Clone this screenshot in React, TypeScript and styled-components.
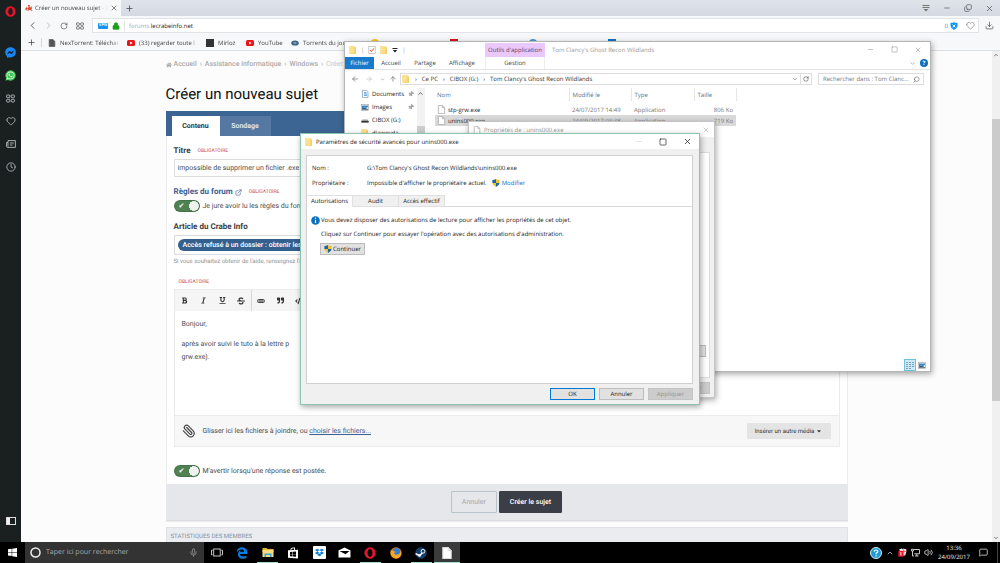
import React from "react";
import styled, { createGlobalStyle, css } from "styled-components";
import {
  Heart, Clock, Download, X, Minus, Square, Search, Lock, RotateCw, ArrowLeft, ArrowRight, ArrowUp,
  ChevronDown, ChevronUp, ChevronLeft, ChevronRight, ExternalLink, Paperclip, Mic, Pin,
  Volume2, MessageSquare, Copy, Plus,
} from "lucide-react";
import {
  FaFacebookMessenger, FaWhatsapp, FaHome, FaBold, FaItalic, FaUnderline, FaStrikethrough,
  FaQuoteRight, FaCode, FaDropbox, FaEdgeLegacy, FaCaretDown,
} from "react-icons/fa";

const UI = `"Open Sans", "Noto Sans", sans-serif`;
const WEB = `Roboto, "Liberation Sans", sans-serif`;

const GlobalStyle = createGlobalStyle`
  *, *::before, *::after { box-sizing: border-box; }
  body { margin: 0; font-family: ${UI}; font-size: 6px; color: #222; overflow: hidden; text-rendering: geometricPrecision; }
  button, input, select { font: inherit; color: inherit; margin: 0; padding: 0; border: 0; background: none; border-radius: 0; text-rendering: inherit; }
  a { color: inherit; text-decoration: none; }
  svg { display: block; flex: none; }
  h1, h2, p, dl, dd { margin: 0; font-weight: 400; }
`;

const Desktop = styled.div`
  position: relative;
  display: flex;
  flex-direction: column;
  height: 100vh;
  overflow: hidden;
  background: #fff;
`;

/* ---------- Browser ---------- */

const Browser = styled.div`
  flex: 1;
  min-height: 0;
  display: flex;
`;

const SideRail = styled.nav`
  flex: 0 0 21px;
  display: flex;
  flex-direction: column;
  align-items: center;
  padding: 5px 0 16px;
  background: #1a1f20;
  color: #b9bdbf;
`;

const RailButton = styled.button<{ $first?: boolean; $last?: boolean }>`
  display: grid;
  place-items: center;
  width: 21px;
  height: 12px;
  margin-bottom: ${(p) => (p.$first ? 29 : 11)}px;
  ${(p) => p.$last && "margin-top: auto; margin-bottom: 0; height: 10px;"}
`;

const BrowserMain = styled.div`
  flex: 1;
  min-width: 0;
  display: flex;
  flex-direction: column;
`;

const TabStrip = styled.div`
  display: flex;
  align-items: center;
  height: 16px;
  flex: none;
  padding-right: 5px;
  background: linear-gradient(#dfe4eb, #d5dae2);
  color: #444;
`;

const BrowserTab = styled.div`
  display: flex;
  align-items: center;
  gap: 2px;
  width: 100px;
  height: 16px;
  padding: 0 3px 0 4px;
  background: #f7f8fa;
  margin-right: 4px;
`;

const FadeText = styled.span<{ $width: number }>`
  width: ${(p) => p.$width}px;
  line-height: 12px;
  white-space: nowrap;
  mask-image: linear-gradient(to right, #000 85%, transparent);
`;

const IconButton = styled.button<{ $w?: number }>`
  display: grid;
  place-items: center;
  width: ${(p) => p.$w ?? 12}px;
  height: 12px;
  flex: none;
`;

const WindowButtons = styled.div<{ $gap?: number; $color?: string }>`
  display: flex;
  gap: ${(p) => p.$gap ?? 12}px;
  margin-left: auto;
  color: ${(p) => p.$color ?? "#555"};
`;

const Toolbar = styled.div`
  display: flex;
  align-items: center;
  height: 19px;
  flex: none;
  padding: 0 5px;
  background: #f7f8fa;
  color: #555;
`;

const NavButtons = styled.div`
  display: flex;
  gap: 4px;
  margin-right: 6px;
`;

const AddressBox = styled.div`
  flex: 1;
  display: flex;
  align-items: center;
  gap: 4px;
  height: 15px;
  padding: 0 2px 0 5px;
  margin-right: 4px;
  border: 1px solid #e1e3e7;
  background: #fff;
`;

const VpnBadge = styled.span`
  width: 10px;
  height: 6px;
  border-radius: 1px;
  background: #1593f5;
  color: #fff;
  font-size: 4px;
  font-weight: 700;
  line-height: 6px;
  text-align: center;
`;

const Url = styled.div`
  flex: 1;
  padding-left: 4px;
  border-left: 1px solid #e4e4e4;
  line-height: 10px;
  color: #222;
  span { color: #aaa; }
`;

const Blocked = styled.span`
  display: flex;
  align-items: center;
  gap: 2px;
  color: #1593f5;
  margin-right: 2px;
`;

const Bookmarks = styled.nav`
  display: flex;
  align-items: center;
  height: 16px;
  flex: none;
  padding: 0 5px;
  background: #f7f8fa;
  border-bottom: 1px solid #dcdee1;
  overflow: hidden;
  color: #444;
`;

const Bookmark = styled.a<{ $width: number }>`
  display: flex;
  align-items: center;
  gap: 4px;
  flex: 0 0 ${(p) => p.$width}px;
`;

const BarSeparator = styled.span`
  width: 1px;
  height: 9px;
  margin: 0 6px 0 5px;
  background: #d5d7da;
`;

const Dot = styled.span<{ $bg: string; $round?: boolean }>`
  width: 8px;
  height: 8px;
  flex: none;
  background: ${(p) => p.$bg};
  border-radius: ${(p) => (p.$round ? 4 : 0)}px;
`;

const Viewport = styled.div`
  flex: 1;
  min-height: 0;
  display: flex;
  background: #fcfcfc;
`;

const Page = styled.main`
  flex: 1;
  min-width: 0;
  overflow: hidden;
  font-family: ${WEB};
  font-size: 7px;
  color: #4b4f54;
`;

const PageColumn = styled.div`
  width: 100%;
  max-width: 682px;
  margin: 0 auto;
`;

const ScrollTrack = styled.div`
  flex: 0 0 8px;
  display: grid;
  grid-template-rows: 8px 60fr 282fr 133fr 8px;
  place-items: center;
  background: #f0f0f0;
  color: #555;
`;

const ScrollThumb = styled.span`
  grid-row: 3;
  width: 8px;
  height: 100%;
  background: #cbcbcb;
`;

const ScrollEnd = styled.span`
  grid-row: 5;
`;

const Breadcrumb = styled.nav`
  display: flex;
  align-items: center;
  gap: 2px;
  padding-top: 8px;
  line-height: 11px;
  font-weight: 500;
  color: #aaa;
  white-space: nowrap;
  i { font-style: normal; padding: 0 1px; }
  span { font-weight: 400; color: #c8c8c8; }
`;

const PageTitle = styled.h1`
  padding: 14px 0 7px;
  font-size: 15px;
  line-height: 20px;
  color: #111;
`;

const Card = styled.section`
  background: #fff;
  border: 1px solid #ececec;
  border-top: 0;
  margin-bottom: 5px;
`;

const CardTabs = styled.div`
  display: flex;
  align-items: flex-end;
  height: 25px;
  padding-left: 6px;
  margin: 0 -1px;
  background: #3d6594;
`;

const CardTab = styled.button<{ $active?: boolean }>`
  height: 20px;
  width: ${(p) => (p.$active ? 48 : 51)}px;
  font-weight: 700;
  color: ${(p) => (p.$active ? "#333" : "#dfe6ee")};
  background: ${(p) => (p.$active ? "#fff" : "#5578a3")};
`;

const CardBody = styled.form`
  padding: 9px 7px 7px;
`;

const Field = styled.div`
  display: grid;
  gap: 2px;
  margin-bottom: 9px;
`;

const LabelRow = styled.div`
  display: flex;
  align-items: center;
  gap: 7px;
  height: 12px;
  font-size: 8px;
  line-height: 12px;
  font-weight: 700;
  color: #3a3d42;
  a { display: flex; align-items: center; gap: 2px; color: #3d5f94; }
`;

const Required = styled.span<{ $indent?: boolean }>`
  font-size: 5px;
  line-height: 12px;
  font-weight: 400;
  color: #c8494c;
  padding-left: ${(p) => (p.$indent ? 5 : 0)}px;
`;

const TextInput = styled.input`
  width: 100%;
  height: 18px;
  padding: 0 3px;
  border: 1px solid #dcdcdc;
  border-radius: 1px;
  background: #fff;
`;

const ToggleRow = styled.label`
  display: flex;
  align-items: center;
  gap: 3px;
  height: 12px;
  line-height: 12px;
`;

const Toggle = styled.input`
  appearance: none;
  width: 26px;
  height: 12px;
  border-radius: 6px;
  background:
    radial-gradient(circle at 20px 6px, #f0f2f0 0 4px, #dfe5df 5px, transparent 5px),
    #4f8152;
  box-shadow: inset 0 0 0 1px #44724a;
  &::before {
    content: "✔";
    display: block;
    padding-left: 5px;
    font: 7px/12px "DejaVu Sans", sans-serif;
    color: #fff;
  }
`;

const TagBox = styled.div`
  height: 20px;
  padding: 3px;
  border: 1px solid #dcdcdc;
  overflow: hidden;
`;

const Tag = styled.span`
  display: inline-block;
  height: 12px;
  padding: 0 5px;
  border-radius: 6px;
  background: #34608f;
  color: #fff;
  font-weight: 500;
  line-height: 12px;
  white-space: nowrap;
`;

const Help = styled.p`
  font-size: 6px;
  line-height: 10px;
  color: #929292;
`;

const Editor = styled.div`
  border: 1px solid #ebebeb;
  margin: 1px 0 18px;
`;

const EditorTools = styled.div`
  display: flex;
  align-items: center;
  height: 21px;
  background: #f5f5f5;
  color: #333;
`;

const ToolGroup = styled.div`
  display: flex;
  align-items: center;
  height: 100%;
  border-right: 1px solid #d8d8d8;
`;

const ToolButton = styled.button`
  display: grid;
  place-items: center;
  width: 19px;
  height: 20px;
`;

const EditorText = styled.div`
  height: 104px;
  padding: 7px;
  line-height: 13px;
  p + p { margin-top: 7px; }
`;

const Attach = styled.div`
  display: flex;
  align-items: center;
  height: 31px;
  padding: 0 8px 0 7px;
  gap: 7px;
  border-top: 1px solid #ebebeb;
  background: #f7f7f7;
  a { color: #3d5f94; text-decoration: underline; }
`;

const MediaButton = styled.button`
  display: flex;
  align-items: center;
  justify-content: center;
  gap: 2px;
  width: 84px;
  height: 16px;
  margin-left: auto;
  border-radius: 1px;
  background: #e4e4e4;
  font-size: 6px;
  color: #333;
`;

const CardFooter = styled.div`
  display: flex;
  align-items: center;
  justify-content: center;
  gap: 2px;
  height: 37px;
  margin: 0 -1px;
  background: #e5e7eb;
  border-bottom: 1px solid #dcdee1;
`;

const FormButton = styled.button<{ $primary?: boolean }>`
  height: 22px;
  padding: 0 10px;
  border-radius: 1px;
  font-weight: ${(p) => (p.$primary ? 500 : 400)};
  color: ${(p) => (p.$primary ? "#fff" : "#a3aab1")};
  background: ${(p) => (p.$primary ? "#3b3e47" : "transparent")};
  border: 1px solid ${(p) => (p.$primary ? "#3b3e47" : "#b9c3cc")};
`;

const StatsHeader = styled.h2`
  height: 30px;
  padding: 0 4px;
  border: 1px solid #e0e1e4;
  background: #ebecf0;
  color: #8492a2;
  font-size: 6px;
  line-height: 18px;
`;

/* ---------- Windows floating over the desktop ---------- */

const FloatWindow = styled.section<{ $x: number; $y: number; $w: number; $h: number; $edge: string; $bg: string }>`
  position: absolute;
  left: ${(p) => p.$x}px;
  top: ${(p) => p.$y}px;
  width: ${(p) => p.$w}px;
  height: ${(p) => p.$h}px;
  display: flex;
  flex-direction: column;
  border: 1px solid ${(p) => p.$edge};
  background: ${(p) => p.$bg};
  box-shadow: 1px 2px 6px rgba(0, 0, 0, 0.35);
`;

const WindowTitle = styled.header<{ $muted?: boolean }>`
  display: flex;
  align-items: center;
  gap: 3px;
  height: 15px;
  flex: none;
  padding: 0 6px 0 4px;
  background: #fff;
  color: ${(p) => (p.$muted ? "#999" : "#222")};
  white-space: nowrap;
`;

const QuickAccess = styled.div`
  display: flex;
  align-items: center;
  gap: 4px;
  width: 133px;
`;

const ContextTitle = styled.span`
  width: 60px;
  height: 14px;
  align-self: flex-end;
  background: #ebc8fc;
  color: #5b4066;
  text-align: center;
  line-height: 14px;
  margin-right: 4px;
`;

const Ribbon = styled.div`
  display: flex;
  align-items: center;
  height: 13px;
  flex: none;
  border-bottom: 1px solid #e3e3e3;
  color: #444;
`;

const RibbonTab = styled.button<{ $w: number; $file?: boolean; $context?: boolean }>`
  width: ${(p) => p.$w}px;
  height: 12px;
  ${(p) => p.$file && "background: #1979ca; color: #fff;"}
  ${(p) => p.$context && "margin-left: 3px; border: solid #eee; border-width: 0 1px;"}
`;

const RibbonEnd = styled.div`
  display: flex;
  align-items: center;
  gap: 4px;
  margin-left: auto;
  padding-right: 2px;
  color: #888;
`;

const HelpDot = styled.button`
  width: 8px;
  height: 8px;
  border-radius: 4px;
  background: #0f6cbd;
  color: #fff;
  font-weight: 700;
  line-height: 8px;
`;

const PathRow = styled.div`
  display: flex;
  align-items: center;
  height: 18px;
  flex: none;
  padding: 0 6px 0 4px;
  color: #666;
`;

const PathBox = styled.div`
  flex: 1;
  display: flex;
  align-items: center;
  gap: 5px;
  height: 12px;
  padding-left: 1px;
  margin: 0 6px 0 1px;
  border: 1px solid #ddd;
  color: #333;
  white-space: nowrap;
`;

const PathEnd = styled.div`
  display: flex;
  align-items: center;
  height: 100%;
  margin-left: auto;
  button + button { border-left: 1px solid #ddd; }
`;

const SearchBox = styled.div`
  display: flex;
  align-items: center;
  width: 106px;
  height: 12px;
  padding: 0 3px 0 4px;
  border: 1px solid #ddd;
  input { flex: 1; min-width: 0; }
  input::placeholder { color: #777; opacity: 1; }
`;

const ExplorerBody = styled.div`
  flex: 1;
  min-height: 0;
  display: flex;
`;

const Tree = styled.nav`
  width: 72px;
  padding: 0 3px 0 16px;
  overflow: hidden;
`;

const TreeItem = styled.a`
  display: flex;
  align-items: center;
  gap: 3px;
  height: 12px;
  margin-bottom: 1px;
  line-height: 12px;
  white-space: nowrap;
  & > :nth-child(3) { margin-left: auto; rotate: 45deg; }
`;

const TreeScroll = styled.div`
  width: 8px;
  padding-top: 2px;
  background: #f2f2f2;
  color: #555;
  &::after {
    content: "";
    display: block;
    height: 60px;
    margin-top: 29px;
    background: #cdcdcd;
  }
`;

const FileList = styled.div`
  flex: 1;
  padding-left: 10px;
`;

const FileTable = styled.table`
  width: 301px;
  table-layout: fixed;
  border-collapse: collapse;
  line-height: 10px;
  color: #777;
  th { height: 13px; padding: 0 3px; font-weight: 400; text-align: left; color: #5b6f8c; border-right: 1px solid #e6e6e6; font-size: 6px; }
  th:first-child, td:first-child { padding-left: 2px; }
  td { height: 11px; padding: 0 3px; white-space: nowrap; }
  td:last-child { text-align: right; }
  tbody::before { content: ""; display: block; height: 3px; }
`;

const FileRow = styled.tr<{ $selected?: boolean }>`
  background: ${(p) => (p.$selected ? "#d9d9d9" : "transparent")};
`;

const FileName = styled.span`
  display: flex;
  align-items: center;
  gap: 2px;
  color: #222;
`;

const ViewSwitch = styled.div`
  display: flex;
  align-items: center;
  justify-content: flex-end;
  gap: 2px;
  height: 12px;
  flex: none;
  padding-right: 4px;
`;

const ViewButton = styled.button<{ $on?: boolean }>`
  display: grid;
  place-items: center;
  width: ${(p) => (p.$on ? 12 : 8)}px;
  height: 12px;
  ${(p) => p.$on && "background: #cfeaf7; border: 1px solid #6fbfe0;"}
`;

const PropsPanel = styled.div`
  flex: 1;
  display: flex;
  align-items: flex-end;
  justify-content: flex-end;
  margin: 15px 4px 0 7px;
  padding: 0 3px 20px;
  border: 1px solid #dcdcdc;
  background: #fff;
`;

const ButtonRow = styled.div<{ $tight?: boolean }>`
  display: flex;
  justify-content: flex-end;
  gap: 4px;
  padding: ${(p) => (p.$tight ? "4px 4px 3px" : "4px 6px 4px")};
`;

const WinButton = styled.button<{ $kind?: "default" | "disabled" }>`
  display: flex;
  align-items: center;
  justify-content: center;
  gap: 1px;
  width: 45px;
  height: 12px;
  line-height: 10px;
  background: #e1e1e1;
  border: 1px solid #bdbdbd;
  ${(p) => p.$kind === "default" && css`border-color: #0078d7;`}
  ${(p) => p.$kind === "disabled" && css`background: #cccccc; border-color: #c4c4c4; color: #949494;`}
`;

const SecurityPanel = styled.div`
  flex: 1;
  display: flex;
  flex-direction: column;
  margin: 6px 6px 0 5px;
  border: 1px solid #cfcfcf;
  background: #fff;
`;

const Facts = styled.dl`
  display: grid;
  grid-template-columns: 55px 1fr;
  row-gap: 5px;
  padding: 7px 5px 7px;
  line-height: 10px;
  dd { display: flex; align-items: center; gap: 5px; }
  a { display: flex; align-items: center; gap: 2px; color: #0a6fd6; }
`;

const SheetTabs = styled.div`
  display: flex;
  height: 12px;
  &::after { content: ""; flex: 1; border-bottom: 1px solid #d9d9d9; }
`;

const SheetTab = styled.button<{ $active?: boolean }>`
  width: 46px;
  border: 1px solid #e0e0e0;
  border-left: 0;
  ${(p) => (p.$active ? "background: #fff; border-bottom-color: #fff;" : "background: #f0f0f0;")}
`;

const Message = styled.div`
  display: grid;
  justify-items: start;
  gap: 4px;
  padding: 8px 4px;
  line-height: 10px;
  & > p { padding-left: 10px; }
  & > button { margin-left: 9px; }
`;

const MessageLead = styled.div`
  display: flex;
  align-items: center;
  gap: 1px;
`;

/* ---------- Taskbar ---------- */

const Taskbar = styled.footer`
  display: flex;
  align-items: stretch;
  height: 21px;
  flex: none;
  background: #000;
  color: #eee;
`;

const TaskButton = styled.button<{ $open?: boolean; $active?: boolean }>`
  flex: 1;
  display: grid;
  place-items: center;
  &::after {
    content: "";
    grid-area: 1 / 1;
    align-self: end;
    width: ${(p) => (p.$active ? 26 : 21)}px;
    height: 1px;
    background: ${(p) => (p.$open ? "#9fe3cf" : "transparent")};
  }
  & > svg { grid-area: 1 / 1; }
  background: ${(p) => (p.$active ? "#3a3a3a" : "none")};
`;

const StartButton = styled.button`
  display: grid;
  place-items: center;
  width: 25px;
`;

const TaskSearch = styled.label`
  display: flex;
  align-items: center;
  gap: 5px;
  width: 179px;
  padding: 0 6px 0 5px;
  background: #333;
  input { flex: 1; min-width: 0; font-size: 7px; }
  input::placeholder { color: #a9a9a9; opacity: 1; }
`;

const TaskIcons = styled.div`
  display: flex;
  width: 256px;
`;

const Tray = styled.div`
  display: flex;
  align-items: center;
  gap: 4px;
  margin-left: auto;
`;

const TrayClock = styled.time`
  width: 34px;
  text-align: center;
  line-height: 9px;
`;

const ShowDesktop = styled.span`
  width: 1px;
  height: 100%;
  margin: 0 2px 0 1px;
  background: #444;
`;

/* ---------- Drawings ---------- */

const OperaO = ({ size = 12 }: { size?: number }) => (
  <svg width={size} height={size} viewBox="0 0 12 12">
    <path fillRule="evenodd" fill="#e3142c" d="M6 0.3a5.6 5.7 0 1 0 0 11.4a5.6 5.7 0 1 0 0-11.4zM6 2.1c1.5 0 2.4 1.7 2.4 3.9S7.500 9.900 6 9.900S3.600 8.200 3.600 6S4.500 2.100 6 2.100z" />
  </svg>
);

const Grid4 = ({ size = 9 }: { size?: number }) => (
  <svg width={size} height={size} viewBox="0 0 9 9" fill="none" stroke="currentColor" strokeWidth="0.9">
    <rect x="0.6" y="1" width="3.2" height="2.700" rx="0.7" />
    <rect x="5.200" y="1" width="3.2" height="2.700" rx="0.7" />
    <rect x="0.6" y="5.300" width="3.2" height="2.700" rx="0.7" />
    <rect x="5.200" y="5.300" width="3.2" height="2.700" rx="0.7" />
  </svg>
);

const NewsIcon = () => (
  <svg width="10" height="8" viewBox="0 0 10 8" fill="none" stroke="currentColor" strokeWidth="0.9">
    <path d="M2 .6h7.400v6.800H1.500Q.6 7.400 .6 6.400V2.500H2zM2 2.500v4M4 3h3.800M4 5h2.500" />
  </svg>
);

const PanelIcon = () => (
  <svg width="10" height="8" viewBox="0 0 10 8">
    <rect x="0.500" y="0.500" width="9" height="7" fill="none" stroke="#ddd" />
    <rect x="1" y="1" width="3" height="6" fill="#eee" />
  </svg>
);

const CrabIcon = () => (
  <svg width="8" height="8" viewBox="0 0 8 8" fill="#d94a2b">
    <ellipse cx="4.600" cy="4.600" rx="2.300" ry="1.500" />
    <path d="M.4 4.200L2 3l.5 1.200L1.800 6 .6 6.400zM3 .8l2 .4-.2 1.400-1.500.3zM5.500 2.300l1.800.6-.5 1.300zM6 5.500l1.500.7-.4.8-1.600-.7zM3 5.800l.8.8-.8.7-.6-.7z" />
  </svg>
);

const YouTubeIcon = () => (
  <svg width="8" height="8" viewBox="0 0 8 8">
    <rect x="0" y="1" width="8" height="6" rx="1.500" fill="#e8141c" />
    <path d="M3.100 2.600v2.800L5.600 4z" fill="#fff" />
  </svg>
);

const TorrentIcon = () => (
  <svg width="8" height="8" viewBox="0 0 8 8">
    <ellipse cx="4" cy="4" rx="3.800" ry="2.600" fill="#3d6486" />
    <path d="M2.500 4h3" stroke="#dfe9f0" strokeWidth="0.800" />
  </svg>
);

const LinkPill = () => (
  <svg width="8" height="8" viewBox="0 0 8 8" fill="none" stroke="#444">
    <rect x="0.700" y="2.500" width="6.600" height="3" rx="1.500" strokeWidth="1.100" />
    <path d="M2 4h4" strokeWidth="1.200" />
  </svg>
);

const FolderIcon = ({ size = 8 }: { size?: number }) => (
  <svg width={size} height={size} viewBox="0 0 8 8">
    <path fill="#f5cf68" d="M0.500 0h5v1l1.500.3V8H.5z" />
    <path fill="#fbe08e" d="M.5 0h4.800v7.500H.5z" />
  </svg>
);

const FileIcon = ({ size = 8, fill = "#fff", stroke = "#aaa" }: { size?: number; fill?: string; stroke?: string }) => (
  <svg width={size} height={size} viewBox="0 0 8 8">
    <path d="M1.200.4h3.600l2 2v5.200H1.200z" fill={fill} stroke={stroke} strokeWidth="0.7" />
    <path d="M4.800.4v2h2" fill="none" stroke={stroke} strokeWidth="0.7" />
  </svg>
);

const CheckedPage = () => (
  <svg width="8" height="8" viewBox="0 0 8 8">
    <rect x="0.800" y="0.400" width="6.400" height="7.200" fill="#fff" stroke="#b5b5b5" strokeWidth="0.700" />
    <path d="M2 4l1.500 1.600L6 2.300" fill="none" stroke="#e0532f" />
  </svg>
);

const QuickMenu = () => (
  <svg width="6" height="6" viewBox="0 0 6 6" fill="#222">
    <path d="M.5 1h5v.9h-5zM.8 3h4.400L3 5.500z" />
  </svg>
);

const PictureIcon = () => (
  <svg width="8" height="7" viewBox="0 0 8 7">
    <rect x="0.400" y="0.500" width="7.200" height="6" fill="#fff" stroke="#999" strokeWidth="0.600" />
    <path fill="#3a87c8" d="M1 1.500h6v1.600L5 4 3 3.500l-2 1z" />
    <path fill="#3c5a78" d="M1 4.500l2-1 4 1.500v.8H1z" />
  </svg>
);

const DocLibIcon = () => (
  <svg width="8" height="8" viewBox="0 0 8 8">
    <path d="M1.500.4h4l1.500 1.500v5.700H1.500z" fill="#fff" stroke="#6d93b8" strokeWidth="0.700" />
    <path d="M3 2.600h2.500M3 4h3M3 5.400h3" stroke="#3a87c8" strokeWidth="0.800" />
  </svg>
);

const DriveIcon = () => (
  <svg width="8" height="8" viewBox="0 0 8 8">
    <path fill="#999" d="M1.500 3.500h5l1.200 1.500H.3z" />
    <rect x="0.300" y="5" width="7.400" height="1.600" fill="#333" />
  </svg>
);

const Shield = ({ size = 8 }: { size?: number }) => (
  <svg width={size} height={size} viewBox="0 0 8 8">
    <path fill="#1d64ab" d="M4 0Q2.500 1 .4 1.100V4H4z" />
    <path fill="#f4c22b" d="M4 0Q5.500 1 7.600 1.100V4H4z" />
    <path fill="#f4c22b" d="M.4 4Q.8 6.500 4 8V4z" />
    <path fill="#1d64ab" d="M7.600 4Q7.200 6.500 4 8V4z" />
  </svg>
);

const InfoIcon = () => (
  <svg width="9" height="9" viewBox="0 0 9 9">
    <circle cx="4.500" cy="4.500" r="4.300" fill="#0b6fc2" />
    <path d="M4.500 3.800v3.200" stroke="#fff" strokeWidth="1.200" />
    <circle cx="4.500" cy="2.300" r="0.700" fill="#fff" />
  </svg>
);

const OperaMenu = () => (
  <svg width="8" height="8" viewBox="0 0 8 8" stroke="#777" fill="#777">
    <path d="M.5 1.500h7M.5 3.500h7" />
    <path stroke="none" d="M1.500 5h5L4 7.500z" />
  </svg>
);

const BlockShield = () => (
  <svg width="8" height="8" viewBox="0 0 8 8">
    <path fill="#1593f5" d="M.5.8Q2.500 1 4 .2 5.500 1 7.500.8V4Q7.200 6.600 4 7.900.8 6.600.5 4z" />
    <path d="M2.600 2.600l2.800 2.800M5.400 2.600L2.600 5.400" stroke="#fff" strokeWidth="0.900" />
  </svg>
);

const WindowsLogo = () => (
  <svg width="9" height="9" viewBox="0 0 9 9" fill="#fff">
    <path d="M0 1.300l3.700-.5v3.400H0zM4.200.7L9 0v4.200H4.200zM0 4.700h3.700v3.400L0 7.600zM4.200 4.700H9V9l-4.800-.7z" />
  </svg>
);

const TaskViewIcon = () => (
  <svg width="12" height="9" viewBox="0 0 12 9" fill="none" stroke="#ddd" strokeWidth="0.900">
    <rect x="2.700" y="1" width="6.500" height="7" />
    <path d="M1.700 2.200H.5v4.600h1.200M10.300 2.200h1.200v4.600h-1.200" />
  </svg>
);

const ExplorerIcon = () => (
  <svg width="12" height="11" viewBox="0 0 12 11">
    <path fill="#e9b93f" d="M.5 1h4l1 1h6v3H.5z" />
    <path fill="#fbdc7d" d="M.5 3h11v7H.5z" />
    <path fill="#35a3dc" d="M2.500 10V6.500h7V10H8V8H4v2z" />
  </svg>
);

const StoreIcon = () => (
  <svg width="12" height="12" viewBox="0 0 12 12">
    <path d="M4 3.500V1.500l3.500-.8v2.500" fill="none" stroke="#fff" strokeWidth="0.900" />
    <path fill="#fff" d="M1 3.200l10-.4v8.700L1 10.800z" />
    <path fill="#000" d="M3 5l2.500-.2v2.100H3zM6 4.800l3-.2v2.300H6zM3 7.300h2.500v2.200L3 9.300zM6 7.300h3v2.500l-3-.3z" />
  </svg>
);

const MailIcon = () => (
  <svg width="13" height="11" viewBox="0 0 13 11">
    <path fill="#fff" d="M.5 3.500L6.500.5l6 3V10.500H.5z" />
    <path d="M1.500 4h10L7.500 7.300z" fill="#000" />
  </svg>
);

const DropboxTile = () => (
  <svg width="13" height="13" viewBox="0 0 13 13">
    <rect width="13" height="13" rx="1" fill="#fff" />
    <FaDropbox x={2} y={2} size={9} color="#0a7be0" />
  </svg>
);

const SteamTile = () => (
  <svg width="12" height="12" viewBox="0 0 12 12">
    <circle cx="6" cy="6" r="5.700" fill="#12406e" />
    <path d="M.6 6.800L4.800 8.600 8 5" stroke="#fff" strokeWidth="1.500" fill="none" />
    <circle cx="8" cy="4.300" r="1.900" fill="#12406e" stroke="#fff" strokeWidth="0.900" />
    <circle cx="4.500" cy="8.500" r="1.300" fill="#fff" />
  </svg>
);

const FirefoxTile = () => (
  <svg width="12" height="12" viewBox="0 0 12 12">
    <circle cx="6" cy="6" r="5.700" fill="#f07b1d" />
    <circle cx="6.300" cy="4.900" r="3.800" fill="#2f7fcf" />
    <path fill="#f5a623" d="M.8 3.200Q2 4 3.600 3.700L5.500 5 4 6.300Q5 8.300 7.500 7.600 9.800 7 10.800 4.500 12 9 8.500 11 4 12.500 1.500 9 .2 6.500.8 3.200z" />
  </svg>
);

const HelpBubble = () => (
  <svg width="12" height="12" viewBox="0 0 12 12">
    <circle cx="6" cy="6" r="5.500" fill="#1c9ad6" stroke="#d8eef8" />
    <path d="M4.200 4.600Q4.300 3 6 3t1.800 1.500Q7.800 5.500 6.100 6.300V7.300M6.100 8.200v1.200" stroke="#fff" strokeWidth="1.200" fill="none" />
  </svg>
);

const GiftBadge = () => (
  <svg width="9" height="9" viewBox="0 0 9 9">
    <path fill="#fff" d="M1 1.500L4 .5l.7 1L5.500.5l3 1L8.200 4l-1 3.500H5z" />
    <path stroke="#e3142c" strokeWidth="0.700" d="M5.800 1v6M5 3.300h3.500" />
    <rect x="0.300" y="2.800" width="5" height="6" rx="1" fill="#e3142c" />
    <path stroke="#fff" strokeWidth="0.900" d="M2.900 4v3.500" />
  </svg>
);

const NetworkIcon = () => (
  <svg width="9" height="9" viewBox="0 0 9 9" fill="none" stroke="#ddd" strokeWidth="0.900">
    <path d="M3 1.500h5.500v4.300H3.300M5.800 6v2M4 8h3.500M.5 1.200h2v1.700h-2zM1.500 3v5h1.500" />
  </svg>
);

const DetailsView = () => (
  <svg width="8" height="8" viewBox="0 0 8 8" strokeWidth="1">
    <path d="M0 1.500h2M0 3.500h2M0 5.500h2M0 7.500h2" stroke="#9a9a9a" />
    <path d="M3 1.500h2M6 1.500h2M3 3.500h2M6 3.500h2M3 5.500h2M6 5.500h2M3 7.500h2" stroke="#6aa9cf" />
  </svg>
);

/* ---------- Data ---------- */

const places = [
  { name: "Documents", icon: <DocLibIcon />, pinned: true },
  { name: "Images", icon: <PictureIcon />, pinned: true },
  { name: "CIBOX (G:)", icon: <DriveIcon />, pinned: false },
  { name: "djaweyda", icon: <FolderIcon />, pinned: false },
];

const files = [
  { name: "stp-grw.exe", date: "24/07/2017 14:49", kind: "Application", size: "806 Ko", selected: false },
  { name: "unins000.exe", date: "24/09/2017 03:38", kind: "Application", size: "719 Ko", selected: true },
];

const bookmarks = [
  { label: "NexTorrent: Téléchar", icon: <FileIcon fill="#555" stroke="#555" />, text: 60, width: 79 },
  { label: "(33) regarder toute l", icon: <YouTubeIcon />, text: 60, width: 79 },
  { label: "Mirloz", icon: <Dot $bg="#333" />, text: 24, width: 40 },
  { label: "YouTube", icon: <YouTubeIcon />, text: 30, width: 45 },
  { label: "Torrents du jour", icon: <TorrentIcon />, text: 56, width: 80 },
  { label: "", icon: <Dot $bg="#f2c81d" $round />, text: 50, width: 79 },
  { label: "", icon: <Dot $bg="#d8131b" />, text: 50, width: 79 },
  { label: "", icon: <Dot $bg="#4c9cc9" $round />, text: 50, width: 79 },
  { label: "", icon: <Dot $bg="#1670c0" />, text: 50, width: 79 },
];

/* ---------- Sections ---------- */

const Rail = () => (
  <SideRail>
    <RailButton $first aria-label="Opera"><OperaO size={11} /></RailButton>
    <RailButton aria-label="Messenger"><FaFacebookMessenger size={11} color="#1787f7" /></RailButton>
    <RailButton aria-label="WhatsApp">
      <svg width="11" height="11" viewBox="0 0 11 11">
        <path fill="#3fc351" d="M5.500.3a5.200 5.200 0 1 1-2.600 9.700L.4 10.700l.7-2.500A5.200 5.200 0 0 1 5.500.3z" />
        <FaWhatsapp x={1} y={1} size={9} color="#fff" />
      </svg>
    </RailButton>
    <RailButton aria-label="Speed Dial"><Grid4 /></RailButton>
    <RailButton aria-label="Favoris"><Heart size={10} /></RailButton>
    <RailButton aria-label="Actualités"><NewsIcon /></RailButton>
    <RailButton aria-label="Historique"><Clock size={10} /></RailButton>
    <RailButton $last aria-label="Panneau"><PanelIcon /></RailButton>
  </SideRail>
);

const BrowserChrome = () => (
  <>
    <TabStrip>
      <BrowserTab>
        <CrabIcon />
        <FadeText $width={73}>Créer un nouveau sujet - L</FadeText>
        <IconButton $w={8} aria-label="Fermer l'onglet"><X size={8} /></IconButton>
      </BrowserTab>
      <IconButton $w={9} aria-label="Nouvel onglet"><Plus size={9} /></IconButton>
      <WindowButtons $gap={9}>
        <IconButton aria-label="Menu des onglets"><OperaMenu /></IconButton>
        <IconButton aria-label="Réduire"><Minus size={8} /></IconButton>
        <IconButton aria-label="Restaurer"><Copy size={8} style={{ transform: "scaleY(-1)" }} /></IconButton>
        <IconButton aria-label="Fermer"><X size={9} /></IconButton>
      </WindowButtons>
    </TabStrip>
    <Toolbar>
      <NavButtons>
        <IconButton aria-label="Précédent"><ChevronLeft size={11} /></IconButton>
        <IconButton aria-label="Suivant"><ChevronRight size={11} color="#bbb" /></IconButton>
        <IconButton aria-label="Recharger"><RotateCw size={8} /></IconButton>
        <IconButton aria-label="Speed Dial"><Grid4 size={8} /></IconButton>
      </NavButtons>
      <AddressBox>
        <VpnBadge>VPN</VpnBadge>
        <Lock size={8} fill="#15a015" color="#15a015" />
        <Url><span>forums.</span>lecrabeinfo.net</Url>
        <Blocked>0 <BlockShield /></Blocked>
        <IconButton aria-label="Ajouter aux favoris"><Heart size={9} color="#888" /></IconButton>
      </AddressBox>
      <IconButton aria-label="Téléchargements"><Download size={9} /></IconButton>
    </Toolbar>
    <Bookmarks>
      <IconButton $w={10} aria-label="Ajouter un signet"><Plus size={9} /></IconButton>
      <BarSeparator />
      {bookmarks.map((b, i) => (
        <Bookmark key={i} href="#" $width={b.width}>
          {b.icon}
          <FadeText $width={b.text}>{b.label}</FadeText>
        </Bookmark>
      ))}
    </Bookmarks>
  </>
);

const ForumPage = () => (
  <Viewport>
    <Page>
      <PageColumn>
        <Breadcrumb>
          <FaHome size={6} />
          <a href="#">Accueil</a><i>›</i>
          <a href="#">Assistance informatique</a><i>›</i>
          <a href="#">Windows</a><i>›</i>
          <span>Créer un nouveau sujet</span>
        </Breadcrumb>
        <PageTitle>Créer un nouveau sujet</PageTitle>
        <Card>
          <CardTabs>
            <CardTab $active>Contenu</CardTab>
            <CardTab>Sondage</CardTab>
          </CardTabs>
          <CardBody>
            <Field>
              <LabelRow><label htmlFor="topic">Titre</label><Required>OBLIGATOIRE</Required></LabelRow>
              <TextInput id="topic" defaultValue="impossible de supprimer un fichier .exe" />
            </Field>
            <Field>
              <LabelRow>
                <a href="#">Règles du forum <ExternalLink size={7} /></a>
                <Required>OBLIGATOIRE</Required>
              </LabelRow>
              <ToggleRow><Toggle type="checkbox" defaultChecked />Je jure avoir lu les règles du forum</ToggleRow>
            </Field>
            <Field>
              <LabelRow>Article du Crabe Info</LabelRow>
              <TagBox><Tag>Accès refusé à un dossier : obtenir les droits</Tag></TagBox>
              <Help>Si vous souhaitez obtenir de l'aide, renseignez l'article</Help>
            </Field>
            <Required as="div" $indent>OBLIGATOIRE</Required>
            <Editor>
              <EditorTools>
                <ToolGroup>
                  <ToolButton type="button" aria-label="Gras"><FaBold size={7} /></ToolButton>
                  <ToolButton type="button" aria-label="Italique"><FaItalic size={7} /></ToolButton>
                  <ToolButton type="button" aria-label="Souligné"><FaUnderline size={7} /></ToolButton>
                  <ToolButton type="button" aria-label="Barré"><FaStrikethrough size={8} /></ToolButton>
                </ToolGroup>
                <ToolButton type="button" aria-label="Lien"><LinkPill /></ToolButton>
                <ToolButton type="button" aria-label="Citation"><FaQuoteRight size={7} /></ToolButton>
                <ToolButton type="button" aria-label="Code"><FaCode size={8} /></ToolButton>
              </EditorTools>
              <EditorText>
                <p>Bonjour,</p>
                <p>après avoir suivi le tuto à la lettre p<br />grw.exe).</p>
              </EditorText>
              <Attach>
                <Paperclip size={14} color="#444" style={{ transform: "scaleX(-1)" }} />
                <span>Glisser ici les fichiers à joindre, ou <a href="#">choisir les fichiers...</a></span>
                <MediaButton type="button">Insérer un autre média <FaCaretDown size={6} /></MediaButton>
              </Attach>
            </Editor>
            <ToggleRow><Toggle type="checkbox" defaultChecked />M'avertir lorsqu'une réponse est postée.</ToggleRow>
          </CardBody>
          <CardFooter>
            <FormButton type="button">Annuler</FormButton>
            <FormButton type="submit" $primary>Créer le sujet</FormButton>
          </CardFooter>
        </Card>
        <StatsHeader>STATISTIQUES DES MEMBRES</StatsHeader>
      </PageColumn>
    </Page>
    <ScrollTrack>
      <ChevronUp size={6} strokeWidth={3} />
      <ScrollThumb />
      <ScrollEnd><ChevronDown size={6} strokeWidth={3} /></ScrollEnd>
    </ScrollTrack>
  </Viewport>
);

const ExplorerWindow = () => (
  <FloatWindow $x={344} $y={41} $w={587} $h={331} $edge="#b5b5b5" $bg="#fff">
    <WindowTitle $muted>
      <QuickAccess>
        <FolderIcon />|<CheckedPage /><FolderIcon /><QuickMenu />|
      </QuickAccess>
      <ContextTitle>Outils d'application</ContextTitle>
      <span>Tom Clancy's Ghost Recon Wildlands</span>
      <WindowButtons $color="#999">
        <IconButton aria-label="Réduire"><Minus size={7} /></IconButton>
        <IconButton aria-label="Agrandir"><Square size={7} /></IconButton>
        <IconButton aria-label="Fermer"><X size={8} /></IconButton>
      </WindowButtons>
    </WindowTitle>
    <Ribbon>
      <RibbonTab $w={29} $file>Fichier</RibbonTab>
      <RibbonTab $w={34}>Accueil</RibbonTab>
      <RibbonTab $w={34}>Partage</RibbonTab>
      <RibbonTab $w={40}>Affichage</RibbonTab>
      <RibbonTab $w={60} $context>Gestion</RibbonTab>
      <RibbonEnd><ChevronDown size={7} /><HelpDot aria-label="Aide">?</HelpDot></RibbonEnd>
    </Ribbon>
    <PathRow>
      <IconButton aria-label="Retour"><ArrowLeft size={8} /></IconButton>
      <IconButton $w={16} aria-label="Avancer"><ArrowRight size={8} color="#bbb" /></IconButton>
      <IconButton $w={10} aria-label="Récents"><ChevronDown size={5} /></IconButton>
      <IconButton aria-label="Dossier parent"><ArrowUp size={8} /></IconButton>
      <PathBox>
        <FolderIcon />›<span>Ce PC</span>›<span>CIBOX (G:)</span>›<span>Tom Clancy's Ghost Recon Wildlands</span>
        <PathEnd>
          <IconButton $w={11} aria-label="Emplacements"><ChevronDown size={6} /></IconButton>
          <IconButton $w={11} aria-label="Actualiser"><RotateCw size={6} /></IconButton>
        </PathEnd>
      </PathBox>
      <SearchBox>
        <input aria-label="Rechercher" placeholder="Rechercher dans : Tom Clanc..." />
        <Search size={7} style={{ transform: "scaleX(-1)" }} />
      </SearchBox>
    </PathRow>
    <ExplorerBody>
      <Tree>
        {places.map((p) => (
          <TreeItem key={p.name} href="#">
            {p.icon}<span>{p.name}</span>{p.pinned && <Pin size={6} color="#888" fill="#aaa" />}
          </TreeItem>
        ))}
      </Tree>
      <TreeScroll><ChevronUp size={7} strokeWidth={3} /></TreeScroll>
      <FileList>
        <FileTable>
          <colgroup><col style={{ width: 134 }} /><col style={{ width: 62 }} /><col style={{ width: 63 }} /><col style={{ width: 42 }} /></colgroup>
          <thead><tr><th>Nom</th><th>Modifié le</th><th>Type</th><th>Taille</th></tr></thead>
          <tbody>
            {files.map((f) => (
              <FileRow key={f.name} $selected={f.selected}>
                <td><FileName><FileIcon size={9} />{f.name}</FileName></td>
                <td>{f.date}</td><td>{f.kind}</td><td>{f.size}</td>
              </FileRow>
            ))}
          </tbody>
        </FileTable>
      </FileList>
    </ExplorerBody>
    <ViewSwitch>
      <ViewButton $on aria-label="Détails"><DetailsView /></ViewButton>
      <ViewButton aria-label="Grandes icônes"><PictureIcon /></ViewButton>
    </ViewSwitch>
  </FloatWindow>
);

const PropertiesWindow = () => (
  <FloatWindow $x={468} $y={121} $w={247} $h={277} $edge="#c4c4c4" $bg="#f0f0f0">
    <WindowTitle $muted>
      <FileIcon />Propriétés de : unins000.exe
      <WindowButtons $color="#aaa"><IconButton $w={6} aria-label="Fermer"><X size={8} /></IconButton></WindowButtons>
    </WindowTitle>
    <PropsPanel><WinButton aria-label="Avancé" /></PropsPanel>
    <ButtonRow $tight><WinButton $kind="disabled" disabled>Appliquer</WinButton></ButtonRow>
  </FloatWindow>
);

const SecurityWindow = () => (
  <FloatWindow $x={300} $y={133} $w={400} $h={272} $edge="#8cc4b2" $bg="#f0f0f0">
    <WindowTitle>
      <FolderIcon />Paramètres de sécurité avancés pour unins000.exe
      <WindowButtons>
        <IconButton aria-label="Réduire"><Minus size={7} color="#ccc" /></IconButton>
        <IconButton aria-label="Agrandir"><Square size={8} color="#222" /></IconButton>
        <IconButton aria-label="Fermer"><X size={9} color="#222" /></IconButton>
      </WindowButtons>
    </WindowTitle>
    <SecurityPanel>
      <Facts>
        <dt>Nom :</dt>
        <dd>G:\Tom Clancy's Ghost Recon Wildlands\unins000.exe</dd>
        <dt>Propriétaire :</dt>
        <dd>Impossible d'afficher le propriétaire actuel. <a href="#"><Shield />Modifier</a></dd>
      </Facts>
      <SheetTabs>
        <SheetTab $active>Autorisations</SheetTab>
        <SheetTab>Audit</SheetTab>
        <SheetTab>Accès effectif</SheetTab>
      </SheetTabs>
      <Message>
        <MessageLead><InfoIcon />Vous devez disposer des autorisations de lecture pour afficher les propriétés de cet objet.</MessageLead>
        <p>Cliquez sur Continuer pour essayer l'opération avec des autorisations d'administration.</p>
        <WinButton><Shield />Continuer</WinButton>
      </Message>
    </SecurityPanel>
    <ButtonRow>
      <WinButton $kind="default">OK</WinButton>
      <WinButton>Annuler</WinButton>
      <WinButton $kind="disabled" disabled>Appliquer</WinButton>
    </ButtonRow>
  </FloatWindow>
);

const SystemBar = () => (
  <Taskbar>
    <StartButton aria-label="Démarrer"><WindowsLogo /></StartButton>
    <TaskSearch>
      <svg width="11" height="11" viewBox="0 0 11 11"><circle cx="5.500" cy="5.500" r="4.500" fill="none" stroke="#eee" strokeWidth="1.500" /></svg>
      <input aria-label="Recherche" placeholder="Taper ici pour rechercher" />
      <Mic size={9} color="#999" />
    </TaskSearch>
    <TaskIcons>
      <TaskButton aria-label="Vue des tâches"><TaskViewIcon /></TaskButton>
      <TaskButton aria-label="Edge"><FaEdgeLegacy size={12} color="#0a7be0" /></TaskButton>
      <TaskButton $open aria-label="Explorateur"><ExplorerIcon /></TaskButton>
      <TaskButton aria-label="Store"><StoreIcon /></TaskButton>
      <TaskButton aria-label="Dropbox"><DropboxTile /></TaskButton>
      <TaskButton aria-label="Courrier"><MailIcon /></TaskButton>
      <TaskButton $open aria-label="Opera"><OperaO /></TaskButton>
      <TaskButton aria-label="Firefox"><FirefoxTile /></TaskButton>
      <TaskButton $open aria-label="Steam"><SteamTile /></TaskButton>
      <TaskButton $open $active aria-label="Propriétés"><FileIcon size={12} fill="#fff" stroke="#ddd" /></TaskButton>
    </TaskIcons>
    <Tray>
      <HelpBubble />
      <ChevronUp size={8} />
      <GiftBadge />
      <NetworkIcon />
      <Volume2 size={9} />
      <TrayClock>13:36<br />24/09/2017</TrayClock>
      <IconButton $w={17} aria-label="Notifications"><MessageSquare size={9} /></IconButton>
      <ShowDesktop />
    </Tray>
  </Taskbar>
);

export default function App() {
  return (
    <Desktop>
      <GlobalStyle />
      <Browser>
        <Rail />
        <BrowserMain>
          <BrowserChrome />
          <ForumPage />
        </BrowserMain>
      </Browser>
      <SystemBar />
      <ExplorerWindow />
      <PropertiesWindow />
      <SecurityWindow />
    </Desktop>
  );
}
